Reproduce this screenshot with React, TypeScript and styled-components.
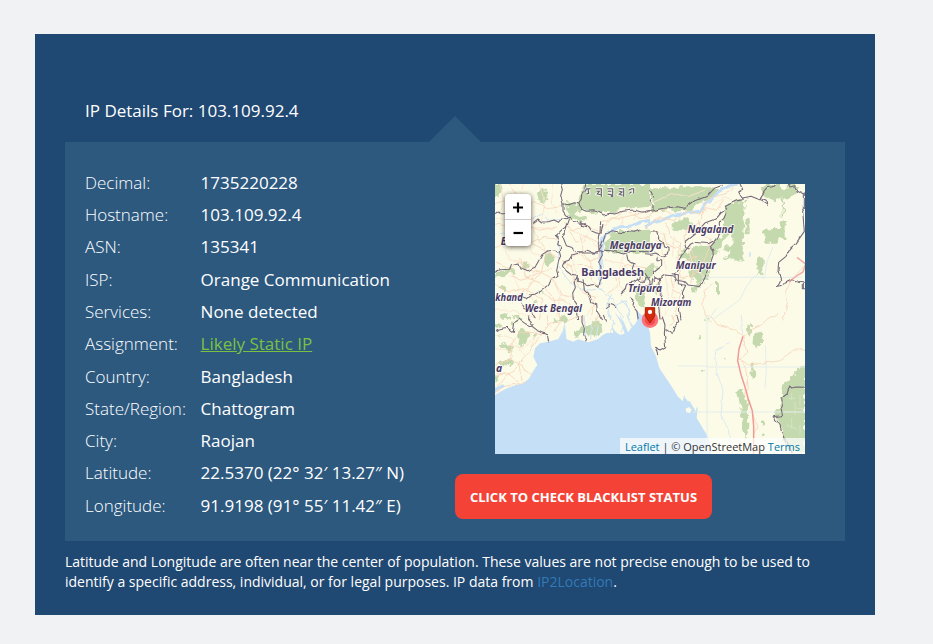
import React from 'react';
import styled, { createGlobalStyle } from 'styled-components';

const GlobalStyle = createGlobalStyle`
  * { box-sizing: border-box; }
  body { margin: 0; background: #f1f2f4; font-family: "Open Sans", sans-serif; color: #fff; }
`;

const Page = styled.main`
  height: 644px;
  padding: 34px 0 0 35px;
  overflow: hidden;
`;

const Card = styled.section`
  display: flex;
  flex-direction: column;
  width: 840px;
  height: 581px;
  padding: 62px 30px 0;
  background: #1f4872;
`;

const Heading = styled.h1`
  margin: 0;
  padding-left: 20px;
  height: 20px;
  font-size: 17px;
  font-weight: 400;
  line-height: 30px;
  white-space: nowrap;
`;

const Pointer = styled.div`
  align-self: center;
  width: 52px;
  height: 26px;
  background: #2d597f;
  clip-path: polygon(50% 0, 100% 100%, 0 100%);
`;

const Panel = styled.div`
  display: flex;
  justify-content: space-between;
  height: 399px;
  padding: 25px 40px 0 20px;
  background: #2d597f;
`;

const Details = styled.dl`
  margin: -0.25px 0 0;
`;

const Row = styled.div`
  display: flex;
  height: 32.3px;
  font-size: 17px;
  line-height: 32.3px;
  white-space: nowrap;
`;

const Label = styled.dt`
  width: 115.6px;
  font-weight: 300;
`;

const Value = styled.dd`
  margin: 0;
  font-weight: 500;
`;

const StatusLink = styled.a`
  color: #7ac143;
  font-weight: 400;
  text-decoration: underline;
`;

const Side = styled.div`
  display: flex;
  flex-direction: column;
  width: 350px;
  padding-top: 17px;
`;

const MapFrame = styled.div`
  position: relative;
  align-self: flex-end;
  width: 310px;
  height: 270px;
  overflow: hidden;
`;

const ZoomControl = styled.div`
  position: absolute;
  top: 10px;
  left: 10px;
  width: 26px;
  border-radius: 4px;
  background: #fff;
  box-shadow: 0 1px 5px rgba(0, 0, 0, 0.65);
`;

const ZoomButton = styled.button`
  display: flex;
  align-items: center;
  justify-content: center;
  width: 26px;
  height: 26px;
  padding: 0;
  border: 0;
  background: transparent;
  &:first-child { border-bottom: 1px solid #ccc; }
`;

const Attribution = styled.div`
  position: absolute;
  right: 0;
  bottom: 0;
  height: 16px;
  padding: 0 5px;
  background: rgba(255, 255, 255, 0.7);
  color: #333;
  font-size: 11px;
  line-height: 18px;
  white-space: nowrap;
  a { color: #0078a8; }
`;

const BlacklistButton = styled.button`
  width: 257px;
  height: 45px;
  margin-top: 20px;
  padding: 1px 0 0;
  border: 0;
  border-radius: 8px;
  background: #f44336;
  color: #fff;
  font: 700 13px/44px "Open Sans", sans-serif;
  white-space: nowrap;
`;

const Note = styled.p`
  margin: 11px 0 0;
  font-size: 14px;
  line-height: 20px;
  white-space: nowrap;
  a { color: #337ab7; }
`;

const RegionMap = styled.svg`
  display: block;
  .forest { fill: #c5d9ae; filter: url(#rough-area); }
  .border { fill: none; stroke: #75687a; stroke-width: 3.2; stroke-linejoin: round; filter: url(#rough-line); }
  .road { fill: none; stroke: #f8d2ba; stroke-width: 2.5; filter: url(#rough-line); }
  .minor { stroke: #fae3cf; }
  .highway { fill: none; stroke: #ef9a97; stroke-width: 4.5; }
  .river { fill: none; stroke: #cfe4f5; stroke-width: 3; filter: url(#rough-line); }
  .faint { stroke: #e4eeee; filter: none; }
  .wide { stroke: #c5dff6; stroke-width: 9; }
  .label {
    fill: #4b3b63;
    stroke: #fff;
    stroke-opacity: 0.75;
    stroke-width: 6px;
    stroke-linejoin: round;
    paint-order: stroke;
    font: italic 700 31px "Noto Sans", "Open Sans", sans-serif;
  }
  .country { font-style: normal; font-size: 33px; }
`;

const rows: [string, string][] = [
  ['Decimal:', '1735220228'],
  ['Hostname:', '103.109.92.4'],
  ['ASN:', '135341'],
  ['ISP:', 'Orange Communication'],
  ['Services:', 'None detected'],
  ['Assignment:', 'Likely Static IP'],
  ['Country:', 'Bangladesh'],
  ['State/Region:', 'Chattogram'],
  ['City:', 'Raojan'],
  ['Latitude:', '22.5370 (22° 32′ 13.27″ N)'],
  ['Longitude:', '91.9198 (91° 55′ 11.42″ E)'],
];

const hillMarks = [
  'M284 36l6-10h12M294 26l2 14-6 2',
  'M318 26h16v24M320 34l8 0-6 8 10 2',
  'M352 26h16v26M354 34h10M354 43l10 1v7',
  'M386 26h15v24M388 34l8 2-8 7 10 3',
  'M417 30l8-4h6v14M424 36l-6 4',
];

const NorthWest = () => (
  <g transform="translate(-15 -12)">
    <path className="forest" d="M15 12h17l8 14-12 20-13 5zM140 35l14 -5 18 4 -4 18 6 8-16 10-12-6zM218 72l20-8 26 8 6-30 12-30 198 0v68l-42 4-36-4-28 20-40-6-22 8-40-14-10 12-22 10-8-28zM230 105l18-5 18 12 22-6 4 12-22 6-22-8zM342 210l12-42 26-14 100-5v70l-60 2-70-6zM100 244l14 6 6 10-14 10-10-12zM166 225l20-8 8 22-22 20-14-12zM15 284l30-16 28-4 4 12-24 9-38 8zM28 322l14-6 12 9-12 10zM432 330l18-8 14 28-4 34-14-12zM126 365l14-4 4 12-14 6zM212 408l10-4 10 10v12h-20zM35 404l18-4 10 16h-30zM88 85l12-4 4 14-14 4zM55 55l14 2-4 12zM150 330l12 2-4 10z"/>
    <path className="river wide" d="M480 121l-26 5-30 12-32 2-36 16-18 20-8 50 2 50 -4 40"/>
    <path className="river" d="M328 325l20 14 20 20 16 32 20 25M395 360l20 24 4 36M365 343l-15 30 12 47M378 378l28-16 14 46M345 170l-10 60 8 50M15 165l35-8 30 12 45-50 30-18 22 20 34-3M202 164l5 50-3 45 30 40 28 22 35 9 40-3"/>
    <path className="road minor" d="M30 12l12 50-12 36M100 12l-10 44 14 40-10 40M150 12l14 62-10 50M190 12l-6 58 18 30M15 115l60 8 50 20 70 2M40 200l20 40 50 6 40 30M80 160l-16 50M110 170l16 50 40 8M60 270l30 60-20 40M130 290l-20 50 40 40M190 300l20 50-10 60M240 150l50 20 30 30M300 140l-20 50M240 230l20 50-20 30M340 240l60 10 20 40M290 330l20 40-20 40M160 400l40-20 50 10M15 390l60 4 60 20M380 90l20 24-10 22M440 86l-8 34M400 230l-20 60 20 40"/>
    <path className="road" d="M15 72l40-15 38 22 45-12 40 18 38-5M60 12l18 28 24 29 12 40-8 42 20 40 42 20 38 24M15 132l45 8 40-12 48 23 52-10M15 204l46-24 54 10 43-18 43 5M120 112l14 50 40 54-22 60-32 40-38 36M15 250l44 16 28-23 44 33 55-8M92 234l14 58 48 18 36 44 21 66M58 290l45 9 48-23 40 22 22 46 42 10M15 312l42 24 47-10 54 32-10 62M209 236l34 22 10 40 28 42 32 8-10 72M225 125l22 28 38-18 42 20 30-34 40-8 83-20M240 155l20 35 27-22 35 18 8 46-32 12-29-20-29 6M270 166l12 54 20 25 2 54 23 22M228 260l45-10 46 20 14 38M354 340l28-20-7-44 38-20 67 9M388 310l10-52M415 95l34 20 31-2M336 124l44-14 31-26M450 330l10-50M160 340l30 22 35-3 31 28"/>
    <path className="border" d="M15 101l8-5 11 5 12 0M212 12l5 17-5 18 7 24 0 22 7 10 9 10 8-1 9 12 12 4 16 4 17 8 8 13 16 7 12-2 6-26M219 71l17 3 18-6 12 4 8-12 1-18 9-12 3-18M266 72l10 15 16 7 20-2 14 5 15 8 19-5 14 2 25-8 30-4 30 6 21-4M130 128l14-11 11 9 20-1 17-5 14 7 9-14 15 3 10-4M239 116l-8 22-15 11-17 17 9 8-5 20 10 5-5 15 4 15-7 18-5 25 4 14-20 12-8 18-24 18-18 9-14 1-12 10-22-5-12 4M15 277l15-8 29-1 5-14 20-5 5 14 22 9 24-10 9-16 12-22 17-11 22-3 10 8M272 125l13 4 5 14-15-4zM231 139l-6 18-8 9 12 31 20 6 8 12 23 0 12-5 20 7 20-5 9 3M217 258l6-13 14-4 7-16 26-6 54 0M217 258l12 15 16 12 17 4 0 15 17 4 15 9 17-4 13 9 2-14 7-12-4-14 4-18-7-17 11-22-2-11M332 124l-2 35-4 30 1 22 7-12 12-34 20-13 33 6 22-6 15 2 16-7M342 211l28 2 30 9 24-8 56 1M262 292l-10 11 4 20-8 16 2 20 12 17-3 16 4 28M279 298l4 30 13 12 6 28 18 6 2 21 16 25M410 223l4 18 18 10-5 15 9 18 14-2 0 12-18 12-22 4-5 20-12 12M442 296l6 8 16 0 4-12 12-2M420 350l12 10-3 20 12 14 4 26M348 386l10-6-4-11 12 4 12 10M92 365l12 20 20 10 12 20"/>
    {hillMarks.map((d) => (
      <g key={d} fill="none">
        <path d={d} stroke="#fff" strokeWidth="10" strokeOpacity=".6" />
        <path d={d} stroke="#665b6d" strokeWidth="3.2" />
      </g>
    ))}
    <text className="label" x="32" y="196">B</text>
    <text className="label" x="359" y="206" textLength="156" lengthAdjust="spacingAndGlyphs">Meghalaya</text>
    <text className="label country" x="274" y="287" textLength="188" lengthAdjust="spacingAndGlyphs">Bangladesh</text>
    <text className="label" x="414" y="337" textLength="102" lengthAdjust="spacingAndGlyphs">Tripura</text>
    <text className="label" x="16" y="363" textLength="82" lengthAdjust="spacingAndGlyphs">khand</text>
    <text className="label" x="104" y="396" textLength="172" lengthAdjust="spacingAndGlyphs">West Bengal</text>
  </g>
);

const NorthEast = () => (
  <g transform="translate(450 -12)">
    <path className="forest" d="M0 20l20 24-2 48 60-4 50 7 24-23 45-15 30-25-28-10H0zM238 78l30-12 33-4-4 40-5 136-58 2 22-22-20-8 30-28-10-20-20 14-20 44-26 8 12-46 32-16 4-58 4-20zM350 30l12-18h46l0 17 20-3v-14h28v20l-24 26h-15l0 49-6 18 11 0v50h-17l-12 16-35 0-4-42 43-3 16-20 0-74-22 10-28-10zM82 125l35-11 24 8-8 28-18-4-16 13-22-12zM96 222l25-12 7 12 22-24 44-4 10 30-8 20-10 50-16 22-16 5 0-25-22-7 6-44-30-10zM336 234l16-2v52h-14zM346 240h10v16h-10zM302 118l12 0v42h-12zM213 306h12v36h-12zM0 262l22-14 12 18-12 25-22 9zM28 318l10-10 5 24-10 15zM142 320l20-5-8 18-12 2z"/>
    <path className="river wide" d="M0 141l20-12 30-8 34-15 46-8 36-4 14-24 20-12 22-24 38-20 18-1"/>
    <path className="river faint" d="M170 292h300"/>
    <path className="river faint" d="M205 417l80-58 18-38 24-32 31 6 8-50 18-45M190 420l24-35"/>
    <path d="M314 216l4 2-2 12-4 0z" fill="#c5dff6"/>
    <path className="road minor" d="M20 70l60-30 50 10 50-20M60 160l-10 50 14 60M88 170l-6 60M30 180l50 20M150 130l30 40M130 210l20 60 30 20M200 80l40-30 20 10M60 280l10 70-10 60M90 300l-10 50 20 20"/>
    <path className="road" d="M0 145l45-32 42 8 40-28 38 10 28-48 54-16 20-24M62 130l12 38 30 24-6 54 8 48M20 152l36 8 10 35 34 8M116 190l10-45 40-18 14-44 34 8 23-33M160 120l10 40 28 20-10 34-18 46-30 28-40 12M134 194l18 46-15 70M42 292l4 126M75 285l12 46 20 10-22 77M110 245l50-18 24 20M202 310l-22 22-7 44 12 42M482 255l-42 42-18 39 6 30-14 54M0 115l30-22 25-6 24 15"/>
    <path className="border" d="M0 97l24-5 0-18-10-15 10-10-6-14-18 0M24 92l34-7 40-5 22 5 28-22 42-18 18-20 25-9M285 12l8 16-12 8 10 18 4 4-22 5-32 16 4 8-16 8-20 23-28 10-30 32-33 26 4 17 12 4M290 55l28-6 30 12 22 15-6-15-18-8 12-18 10-12 15-3 8-8M244 98l-8 18-10 8 0 28-10 26-20 22 7 10 2 14-10 30-14 36-15 30-36-5-10-10-24-4-8-20 15-17-4-18 11-20 26-33 12-6 42 4 16-8M0 153l35 0 6 24 14 10 4 14 13 4 0 15-22 9-18-10-14 4-18-2M36 230l0 12 14 0 0 16-22 18 3 30M28 292l12 6 20-13 30 4M0 280l15 24 0 30M0 319l20-6 3-18M43 296l5 48-7 38 4 36M80 281l20 3 0 27 22 5-10 22 3 27-12 20 5 33M430 12l5 9 14-4 8 20 10-5 11 7 0 47-5 8 5 60-25 36-16 14-14 25-22 18-2 24 8 28-10 20 8-2 36-18 18 5 18 1M480 310l-5 0 0 16 5 0"/>
    <path className="highway" d="M432 306l22-18 20-12 8-24-26-20" strokeOpacity=".8"/>
    <text className="label" x="128" y="158" textLength="137" lengthAdjust="spacingAndGlyphs">Nagaland</text>
    <text className="label" x="92" y="267" textLength="120" lengthAdjust="spacingAndGlyphs">Manipur</text>
    <text className="label" x="18" y="379" textLength="121" lengthAdjust="spacingAndGlyphs">Mizoram</text>
  </g>
);

const SouthWest = () => (
  <g transform="translate(-15 393)">
    <path className="forest" d="M82 54l16-10 20 9-4 21-17 19-15-19zM15 27l15-5 10 7-10 10-15-2zM28 84l34 2 4 12 8 6-16 8-12-8-13-4zM30 142l14-6 12 6-8 10-18 5zM52 138l12-4 8 12-14 10zM15 182l8-5 4 12-12 14zM65 0l22 0 10 12-14 6zM126 58l14-6 4 12-12 12zM260 50l12-14 12 4 26-20 12 -4 14 10 4 24-30 16-28-10-30 14 4-20zM190 16l10 0 0 8-10 0zM20 60l12 0-4 12zM60 20l10 0 0 10-10 0z"/>
    <path className="road minor" d="M15 60l50 10 40 50M60 90l40 10 30-30M120 20l20 40-20 50M15 100l50 10M170 20l30 30"/>
    <path className="road" d="M15 228l35-46 24-18 40-48 18-26 28-38 20-28 50-6 44-18M15 148l48-15 24 16 41 32M62 133l4-45 24-37 65 8M86 148l10 50M15 182l38-8 40 34M212 0l0 20-20 30M278 0l8 42M324 0l-10 38M172 0v30M15 230l30-16 60-12"/>
    <path className="border" d="M15 48l10-5 25-6 20 15 4-30 14-9 18 13 22 9 15 12 12 6 17 7 4 19M116 0l0 14 14 16M276 0l0 22 7 18-2 20 8 16M340 0l7 17"/>
    <path className="river" d="M218 0l6 28-8 40M360 0l15 25-12 28M390 0l12 25-9 28M410 0l16 38M282 0l5 48-6 18M305 28l-3 45M325 30l-6 34"/>
    <path d="M15 218l24-10 6 6-20 10-10 8z" fill="#c5dff6"/>
  </g>
);

const SouthEast = () => (
  <g transform="translate(450 393)">
    <path className="forest" d="M307 28h11v22l-6 14h-6zM325 55l25-5 4 30-21 20-10-22zM317 145h8l8 40-12 6zM277 228h13l8 24 10 10 2 75-6 34-12-30-6-64zM480 155l-25 5-8 24-28 20-8 20 0 42-25 38 20 18 12 65 18 23h44zM158 65l10-2v10h-10zM184 14l12-2v7h-12zM168 162l8 0v7h-8zM350 315l7 2v14h-7zM240 128h5v6h-5zM348 355l16-5-4 12-12 2z"/>
    <path className="river faint" d="M186 0v417M186 156h294M145 291h335M100 153h86M360 220l4-55-3-73"/>
    <path className="river" d="M253 82l-45 26 4 55 22 62-6 75 22 43 10 74M289 0l4 62" strokeOpacity=".7"/>
    <path className="road" d="M190 0l28 30 50 15 28 20 20-20 28-12 20-18 36-20M294 66l12 48-20 18 16 28 8 58-12 20 18 24M281 132l34 18 85-12 40-28 18-9 30 8M322 304l18 32-14 22M80 0l8 22-12 9"/>
    <path className="highway" d="M294 64l-12 38-4 35 10 42 11 34 11 39 12 36 4 45 0 84"/>
    <path className="border" d="M50 0l10 30-2 24 4 44-17 10-14-14 7 26M62 43l20 12 4-18 15-18-6-19M480 217l-27-1-13 3-6-6-8 24-16 12 2 24-6 11 4 18-26 3 20 22 12 43 26 42"/>
    <path d="M440 235v20M450 260v40M465 240v30M430 250h20M420 290h25M425 330l30 12M440 310v30M465 330v30M455 280h20" stroke="#dce8ca" strokeWidth="2" fill="none"/>
  </g>
);

const MapDrawing = () => (
  <RegionMap width="310" height="270" viewBox="0 0 930 810">
    <defs>
      <filter id="rough-line" filterUnits="userSpaceOnUse" x="-30" y="-30" width="1000" height="880">
        <feTurbulence type="fractalNoise" baseFrequency="0.05" numOctaves="1" seed="4" />
        <feDisplacementMap in="SourceGraphic" scale="12" xChannelSelector="R" yChannelSelector="G" />
        <feGaussianBlur stdDeviation="0.7" />
      </filter>
      <filter id="rough-area" filterUnits="userSpaceOnUse" x="-30" y="-30" width="1000" height="880">
        <feTurbulence type="fractalNoise" baseFrequency="0.06" numOctaves="2" seed="9" />
        <feDisplacementMap in="SourceGraphic" scale="24" xChannelSelector="R" yChannelSelector="G" />
        <feGaussianBlur stdDeviation="1" />
      </filter>
    </defs>
    <rect width="930" height="810" fill="#fcfbe7" />
    <path transform="translate(-15 393)" fill="#c5dff6" d="M15 240l25-15 30-13 30-7 18-15 10-20 14-20-12-25 5-25 15-15 25-5 30-8 13-24 7-18 4 42 21 8 14-7 31 9 30-10 10-10 15-8 20 0-6-24 12 20 14 9 14-3-10-30-20-34 30 36 10 24 8-10 -8-34 16 26 12-18 -4-32 16 16 12 0 6 24 8 30 3 40 15 30 10 35 20 30 20 30 15 25 15 15 5-20 10 20 10-5 20 25-3 30 18 30 15 25 10 35 8 95H15z" />
    <path transform="translate(450 393)" fill="#fcfbe7" d="M118 235l14 5 6 14 18 20-4 15-16-28-16-12zM122 281l10-5 8 8-5 10-11-2z" />
    <path transform="translate(-15 393)" fill="#fcfbe7" d="M410 4l10 8 6 26-10 4-10-18zM390 30l8 6-2 22-10-4zM432 0l8 14-4 12-8-14z" />
    <SouthWest />
    <SouthEast />
    <NorthEast />
    <NorthWest />
    <text className="label" x="3" y="564">a</text>
    <circle cx="465" cy="407" r="25" fill="#fa7479" />
    <circle cx="465" cy="408" r="16" fill="#f64a4d" />
    <path d="M451 371h28v25l-14 21-14-21z" fill="#d52b0b" stroke="#a92008" strokeWidth="3" />
    <circle cx="465" cy="384" r="6.5" fill="#fff" />
  </RegionMap>
);

export default function App() {
  return (
    <>
      <GlobalStyle />
      <Page>
        <Card>
          <Heading>IP Details For: 103.109.92.4</Heading>
          <Pointer />
          <Panel>
            <Details>
              {rows.map(([label, value]) => (
                <Row key={label}>
                  <Label>{label}</Label>
                  <Value>{label === 'Assignment:' ? <StatusLink>{value}</StatusLink> : value}</Value>
                </Row>
              ))}
            </Details>
            <Side>
              <MapFrame>
                <MapDrawing />
                <ZoomControl>
                  <ZoomButton aria-label="Zoom in">
                    <svg width="12" height="12" viewBox="0 0 12 12"><path d="M1 6.5h10M6 1.5v10" stroke="#000" strokeWidth="2.2" /></svg>
                  </ZoomButton>
                  <ZoomButton aria-label="Zoom out">
                    <svg width="12" height="12" viewBox="0 0 12 12"><path d="M1.5 6h9.5" stroke="#000" strokeWidth="2.2" /></svg>
                  </ZoomButton>
                </ZoomControl>
                <Attribution><a>Leaflet</a> | © OpenStreetMap <a>Terms</a></Attribution>
              </MapFrame>
              <BlacklistButton>CLICK TO CHECK BLACKLIST STATUS</BlacklistButton>
            </Side>
          </Panel>
          <Note>
            Latitude and Longitude are often near the center of population. These values are not precise enough to be used to<br />
            identify a specific address, individual, or for legal purposes. IP data from <a>IP2Location</a>.
          </Note>
        </Card>
      </Page>
    </>
  );
}
